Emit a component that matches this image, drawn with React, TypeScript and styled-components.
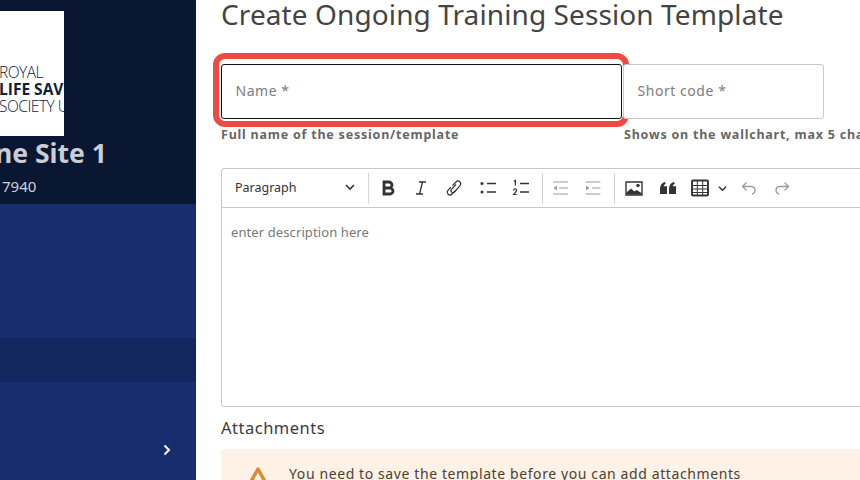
import React from "react";
import styled, { createGlobalStyle } from "styled-components";

const Global = createGlobalStyle`
  html, body { margin: 0; padding: 0; background: #fff; }
  #root { width: 860px; height: 480px; overflow: hidden; }
`;
const Page = styled.div`
  display: flex; width: 860px; height: 480px; overflow: hidden;
  font-family: "Noto Sans", "Open Sans", sans-serif; color: #333;
`;
const Sidebar = styled.aside`
  width: 196px; flex: none; display: flex; flex-direction: column; background: #162e6e; overflow: hidden;
`;
const SiteHeader = styled.div`
  height: 204px; flex: none; background: #0a1733; padding-top: 11px; box-sizing: border-box; color: #cfd3da;
`;
const Logo = styled.div`
  width: 64px; height: 125px; background: #fff; overflow: hidden; color: #10213f;
  display: flex; flex-direction: column; justify-content: flex-end; padding-bottom: 21px; box-sizing: border-box;
  font-family: "Open Sans", sans-serif; font-size: 15.5px; line-height: 17px; white-space: nowrap;
`;
const LogoLine = styled.span<{ $bold?: boolean; $shift: number }>`
  display: block; font-weight: ${p => (p.$bold ? 700 : 300)}; margin-left: ${p => p.$shift}px;
  letter-spacing: ${p => (p.$bold ? "0" : "-0.5px")};
`;
const SiteName = styled.div`
  font-size: 26.5px; font-weight: 700; line-height: 36px; margin: -1px 0 0 -59px; white-space: nowrap; color: #c9ced6;
`;
const SiteCode = styled.div`
  font-size: 15px; line-height: 18px; margin: 6px 0 0 2px; color: #cdd1d8;
`;
const Nav = styled.nav`
  padding-top: 134px; display: flex; flex-direction: column; flex: 1;
`;
const NavRow = styled.div<{ $active?: boolean }>`
  height: 44px; flex: none; display: flex; align-items: center; justify-content: flex-end; padding-right: 24px;
  margin-bottom: 1px; background: ${p => (p.$active ? "#13275f" : "transparent")}; color: #fff;
`;
const Main = styled.main`
  flex: 1; min-width: 0; padding: 0 0 0 25px; overflow: hidden; position: relative;
`;
const Title = styled.h1`
  margin: -1px 0 0; font-size: 28px; line-height: 30px; font-weight: 400; color: #444; white-space: nowrap; letter-spacing: 0.1px;
`;
const FieldRow = styled.div`
  display: flex; margin-top: 35px;
`;
const Field = styled.div<{ $width: number }>`
  width: ${p => p.$width}px; flex: none; position: relative;
`;
const InputBox = styled.div<{ $focus?: boolean }>`
  height: 55px; box-sizing: border-box; border: 1px solid ${p => (p.$focus ? "#111" : "#c8c8c8")}; border-radius: 3px;
  width: ${p => (p.$focus ? "401px" : "100%")}; background: #fff; display: flex; align-items: center; padding: 0 0 2px 13.5px;
  font-size: 14px; color: #7d7d7d; letter-spacing: 0.55px;
`;
const Help = styled.div<{ $inset?: number }>`
  margin: 8px 0 0 ${p => p.$inset ?? 0}px; font-size: 12.5px; line-height: 16px; font-weight: 700; color: #666; white-space: nowrap; letter-spacing: 0.78px;
`;
const Highlight = styled.div`
  position: absolute; left: -8px; top: -11px; width: 416px; height: 74px; box-sizing: border-box;
  border: 6px solid #ee4a42; border-radius: 12px; pointer-events: none;
`;
const Editor = styled.section`
  margin-top: 25px; width: 700px; height: 239px; box-sizing: border-box; border: 1px solid #c8c8c8; border-radius: 3px;
  display: flex; flex-direction: column;
`;
const Toolbar = styled.div`
  height: 39px; flex: none; box-sizing: border-box; border-bottom: 1px solid #c8c8c8; display: flex; align-items: center; color: #333;
`;
const Dropdown = styled.div`
  width: 146px; flex: none; height: 100%; display: flex; align-items: center; justify-content: space-between;
  padding: 0 13px 2px 13px; box-sizing: border-box; font-size: 12.5px; color: #333;
`;
const Sep = styled.span`
  width: 1px; height: 31px; background: #d4d4d4; flex: none;
`;
const ToolBtn = styled.span<{ $w?: number; $muted?: boolean }>`
  width: ${p => p.$w ?? 33.3}px; flex: none; display: flex; align-items: center; justify-content: center;
  color: ${p => (p.$muted ? "#9b9b9b" : "#333")};
`;
const ToolPad = styled.span<{ $w: number }>`
  width: ${p => p.$w}px; flex: none;
`;
const EditorBody = styled.div`
  padding: 15px 9px; font-size: 13px; line-height: 18px; color: #777; letter-spacing: 0.1px;
`;
const SectionTitle = styled.h2`
  margin: 10px 0 0; font-size: 16.5px; line-height: 22px; font-weight: 400; color: #3c3c3c; letter-spacing: 0.5px;
`;
const Alert = styled.div`
  margin-top: 10px; width: 700px; height: 80px; background: #fdf2e5; display: flex; align-items: flex-start;
  padding: 15px 0 0 25px; box-sizing: border-box; border-radius: 3px; font-size: 14px; line-height: 20px; color: #4c4133; letter-spacing: 0.6px;
`;
const AlertIcon = styled.span`
  width: 43px; flex: none; padding-top: 1px;
`;

const Icon = ({ w = 18, h = 18, vb = "0 0 18 18", children }: { w?: number; h?: number; vb?: string; children: React.ReactNode }) => (
  <svg width={w} height={h} viewBox={vb} fill="none" stroke="currentColor" strokeWidth="1.5" aria-hidden="true">{children}</svg>
);
const Chevron = ({ size = 10 }: { size?: number }) => (
  <Icon w={size} h={size} vb="0 0 10 10"><path d="M1 3l4 4 4-4" strokeWidth="1.6" /></Icon>
);

export default function App() {
  return (
    <Page>
      <Global />
      <Sidebar>
        <SiteHeader>
          <Logo>
            <LogoLine $shift={-1}>ROYAL</LogoLine>
            <LogoLine $bold $shift={-1}>LIFE SAVING</LogoLine>
            <LogoLine $shift={-1}>SOCIETY UK</LogoLine>
          </Logo>
          <SiteName>Online Site 1</SiteName>
          <SiteCode>7940</SiteCode>
        </SiteHeader>
        <Nav>
          <NavRow $active />
          <NavRow />
          <NavRow>
            <Icon w={10} h={12} vb="0 0 10 12"><path d="M2.5 1.5L7 6l-4.5 4.5" strokeWidth="2" /></Icon>
          </NavRow>
        </Nav>
      </Sidebar>
      <Main>
        <Title>Create Ongoing Training Session Template</Title>
        <FieldRow>
          <Field $width={402}>
            <InputBox $focus>Name *</InputBox>
            <Help>Full name of the session/template</Help>
            <Highlight />
          </Field>
          <Field $width={201}>
            <InputBox>Short code *</InputBox>
            <Help $inset={1}>Shows on the wallchart, max 5 characters</Help>
          </Field>
        </FieldRow>
        <Editor>
          <Toolbar>
            <Dropdown>Paragraph <Chevron /></Dropdown>
            <Sep />
            <ToolPad $w={2} />
            <ToolBtn><Icon><path d="M5 3h5a3 3 0 0 1 0 6H5zM5 9h6a3 3 0 0 1 0 6H5z" strokeWidth="2.8" /></Icon></ToolBtn>
            <ToolBtn><Icon><path d="M7 3h7M4 15h7M10.5 3l-3 12" strokeWidth="1.3" /></Icon></ToolBtn>
            <ToolBtn><Icon><path d="M7.5 6.5l3.5-3.5a2.6 2.6 0 0 1 4 3.6L9.5 13a2 2 0 0 1-3-2.7l4.5-4.8M10.5 11.5L7 15a2.6 2.6 0 0 1-4-3.6l3-3.2" strokeWidth="1.2" /></Icon></ToolBtn>
            <ToolBtn><Icon><circle cx="3" cy="4.5" r="1.5" fill="currentColor" stroke="none" /><circle cx="3" cy="13" r="1.5" fill="currentColor" stroke="none" /><path d="M8 4.5h9M8 13h9" /></Icon></ToolBtn>
            <ToolBtn><Icon><path d="M2 2.5l1.4-1v5M1.5 11.5a1.5 1.5 0 1 1 2.5 1L1.7 15.5H4.6" strokeWidth="1.2" /><path d="M8 4.5h9M8 13h9" /></Icon></ToolBtn>
            <ToolPad $w={5} />
            <Sep />
            <ToolBtn $muted><Icon><path d="M2 3h15M8 9h9M2 15h15" strokeWidth="1.2" /><path d="M6 6.5v5L2.5 9z" fill="currentColor" stroke="none" /></Icon></ToolBtn>
            <ToolBtn $muted><Icon><path d="M1.5 3h15M8 9h8.5M1.5 15h15" strokeWidth="1.2" /><path d="M2 6.5v5L5.5 9z" fill="currentColor" stroke="none" /></Icon></ToolBtn>
            <ToolPad $w={4} />
            <Sep />
            <ToolPad $w={2} />
            <ToolBtn><Icon><path d="M1 3h16v13H1z" strokeWidth="1.4" /><path d="M1.5 15.5v-2L6 9.5l3.5 3 2-1.5 5 3v1.5z" fill="currentColor" stroke="none" /><circle cx="13" cy="6.5" r="1.7" fill="currentColor" stroke="none" /></Icon></ToolBtn>
            <ToolBtn $w={36}><Icon><path d="M1 10c0-3.5 1.7-6 4.5-7L7 4.6C5.8 5.3 5 6.2 4.7 7.3H8V15H1zM10 10c0-3.5 1.7-6 4.5-7L16 4.6c-1.2.7-2 1.6-2.3 2.7H17V15h-7z" fill="currentColor" stroke="none" /></Icon></ToolBtn>
            <ToolPad $w={2} />
            <ToolBtn $w={24}><Icon><rect x="1" y="1.5" width="16" height="15" rx="1" strokeWidth="1.9" /><path d="M1 6.5h16M1 10h16M1 13.5h16M6.3 2v14M11.7 2v14" strokeWidth="1" /></Icon></ToolBtn>
            <ToolPad $w={4} />
            <ToolBtn $w={12}><Chevron size={9} /></ToolBtn>
            <ToolPad $w={4} />
            <ToolBtn $muted><Icon><path d="M6.5 3.5L2.5 7.5l4 4M3 7.5h8.5a4 4 0 0 1 3.5 4 4 4 0 0 1-3 3.5" strokeWidth="1.3" /></Icon></ToolBtn>
            <ToolBtn $muted><Icon><path d="M11.5 3.5l4 4-4 4M15 7.5H6.5A4 4 0 0 0 3 11.5 4 4 0 0 0 6 15" strokeWidth="1.3" /></Icon></ToolBtn>
          </Toolbar>
          <EditorBody>enter description here</EditorBody>
        </Editor>
        <SectionTitle>Attachments</SectionTitle>
        <Alert>
          <AlertIcon>
            <svg width="24" height="24" viewBox="0 0 24 24" aria-hidden="true">
              <path d="M12 4L22 22H2z" fill="none" stroke="#dd8a35" strokeWidth="3.5" strokeLinejoin="round" />
              <circle cx="12" cy="17" r="1.6" fill="#dd8a35" />
            </svg>
          </AlertIcon>
          You need to save the template before you can add attachments
        </Alert>
      </Main>
    </Page>
  );
}
